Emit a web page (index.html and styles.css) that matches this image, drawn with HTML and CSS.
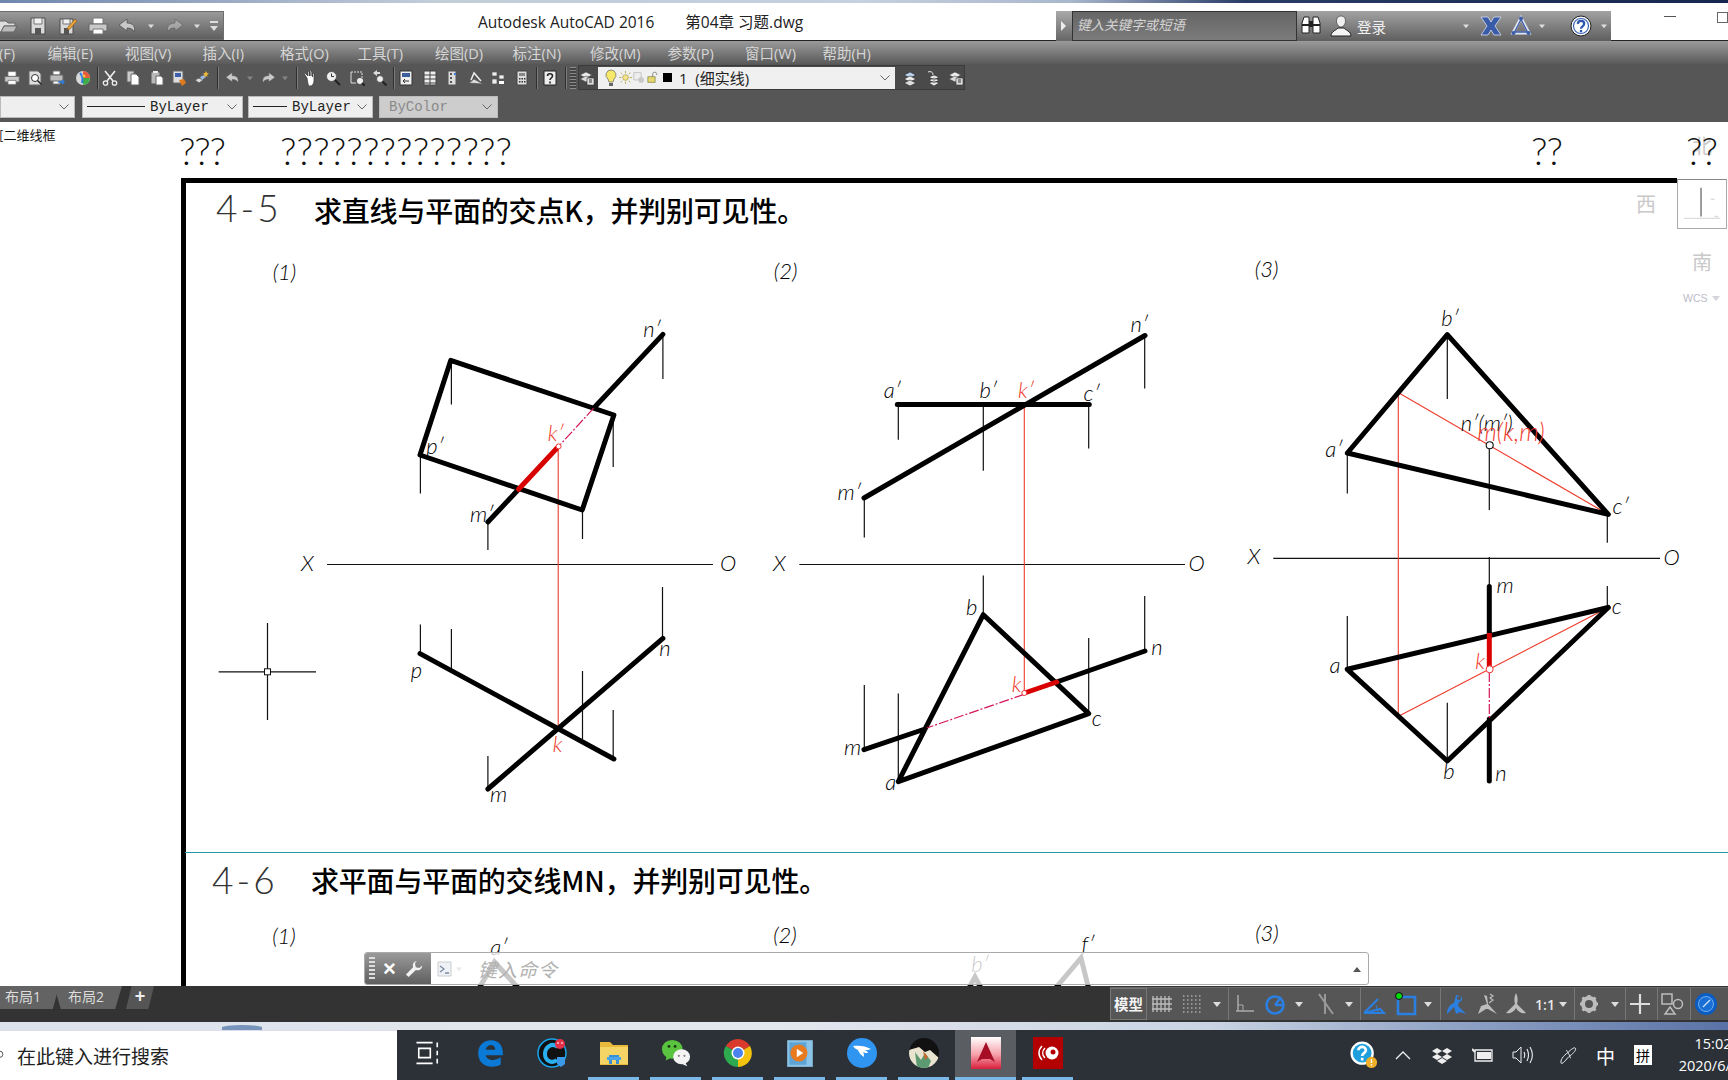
FILE: index.html
```html
<!DOCTYPE html>
<html lang="zh-CN">
<head>
<meta charset="utf-8">
<title>Autodesk AutoCAD 2016</title>
<link rel="stylesheet" href="styles.css">
</head>
<body>
<svg class="defs" aria-hidden="true">
  <defs>
    <symbol id="i-folder" viewBox="0 0 20 20"><path d="M1 5h7l2 2h7v3H6L3 16H1z" fill="#ddd" stroke="#666"/><path d="M6 10h13l-3 6H3z" fill="#bbb" stroke="#666"/></symbol>
    <symbol id="i-save" viewBox="0 0 20 20"><path d="M3 2h14v16H3z" fill="#d8d8d8" stroke="#4a4a4a"/><path d="M6 2h8v6H6z" fill="#f2f2f2" stroke="#777"/><path d="M7 12h6v6H7z" fill="#555"/></symbol>
    <symbol id="i-saveas" viewBox="0 0 20 20"><path d="M2 3h13v15H2z" fill="#d8d8d8" stroke="#4a4a4a"/><path d="M5 3h7v5H5z" fill="#f2f2f2" stroke="#777"/><path d="M6 12h5v6H6z" fill="#555"/><path d="M10 11l7-8 2 2-7 8-3 1z" fill="#e8a33a" stroke="#7a4a10" stroke-width=".6"/></symbol>
    <symbol id="i-print" viewBox="0 0 20 20"><path d="M5 2h10v6H5z" fill="#fff" stroke="#777"/><path d="M1 8h18v7H1z" fill="#c9c9c9" stroke="#666"/><path d="M5 13h10v5H5z" fill="#fff" stroke="#777"/></symbol>
    <symbol id="i-undo" viewBox="0 0 20 20"><path d="M9 3L1 9l8 6v-3c4 0 6 1 7 4 2-5-1-9-7-9z" fill="#c8c8c8" stroke="#555" stroke-width=".8"/></symbol>
    <symbol id="i-redo" viewBox="0 0 20 20"><path d="M11 3l8 6-8 6v-3c-4 0-6 1-7 4-2-5 1-9 7-9z" fill="#c8c8c8" stroke="#555" stroke-width=".8"/></symbol>
    <symbol id="i-dd" viewBox="0 0 8 8"><path d="M0 2h8L4 7z" fill="#ddd"/></symbol>
    <symbol id="i-custom" viewBox="0 0 8 12"><path d="M0 1h8v2H0zM0 6h8L4 11z" fill="#ddd"/></symbol>
    <symbol id="i-chev" viewBox="0 0 10 6"><path d="M.5.5L5 5 9.500.5" fill="none" stroke="#666"/></symbol>
    <symbol id="i-preview" viewBox="0 0 16 16"><path d="M2 1h9l3 3v11H2z" fill="#ddd" stroke="#666"/><circle cx="8" cy="8" r="3.500" fill="#fff" stroke="#333"/><path d="M10.500 10.500l4 4" stroke="#222" stroke-width="1.500"/></symbol>
    <symbol id="i-publish" viewBox="0 0 16 16"><path d="M4 1h7v4H4zM4 10h7v4H4z" fill="#fff" stroke="#777"/><path d="M1 5h13v6H1z" fill="#bbb" stroke="#666"/><path d="M9 12h6M13 10l2 2-2 2" stroke="#2f7de0" stroke-width="1.400" fill="none"/></symbol>
    <symbol id="i-render" viewBox="0 0 16 16"><circle cx="8" cy="8" r="7" fill="#d8d8d8"/><path d="M8 1a7 7 0 0 1 7 7H8z" fill="#e85a3a"/><path d="M15 8a7 7 0 0 1-7 7V8z" fill="#3fae49"/><path d="M5 3c3 3 3 6 2 10" stroke="#2f7de0" stroke-width="2" fill="none"/><circle cx="9" cy="6" r="1.500" fill="#f3c23d"/></symbol>
    <symbol id="i-cut" viewBox="0 0 16 16"><path d="M3 1l8 10M13 1L5 11" stroke="#eee" stroke-width="1.600"/><circle cx="3.500" cy="13" r="2.200" fill="none" stroke="#eee" stroke-width="1.300"/><circle cx="12.500" cy="13" r="2.200" fill="none" stroke="#eee" stroke-width="1.300"/></symbol>
    <symbol id="i-copy" viewBox="0 0 16 16"><path d="M2 1h7v11H2z" fill="#ccc" stroke="#666"/><path d="M6 4h5l3 3v8H6z" fill="#fff" stroke="#666"/></symbol>
    <symbol id="i-paste" viewBox="0 0 16 16"><path d="M2 2h9v12H2z" fill="#b8b8b8" stroke="#555"/><path d="M4 1h5v2H4z" fill="#eee"/><path d="M7 6h5l2 2v7H7z" fill="#fff" stroke="#666"/></symbol>
    <symbol id="i-match" viewBox="0 0 16 16"><path d="M2 1h10v12H2z" fill="#ddd" stroke="#666"/><path d="M4 3h6v4H4z" fill="#3a5fa8"/><path d="M8 10l5-1 2 4-4 3z" fill="#e07a1f"/></symbol>
    <symbol id="i-block" viewBox="0 0 16 16"><path d="M1 10l4-2 4 2-4 3z" fill="#ddd" stroke="#666"/><path d="M6 7l4-2 2 2-4 3z" fill="#9db7df"/><path d="M12 1l1 2 2 .500-2 1.500.5 2-1.500-1-2 1 .500-2-1.500-1.500 2-.500z" fill="#f0b63a"/></symbol>
    <symbol id="i-pan" viewBox="0 0 16 16"><path d="M4 8L2 5c-1-1 0-2 1-1l2 2V2c0-1 1.500-1 1.500 0v4-5c0-1 1.500-1 1.500 0v5-4c0-1 1.500-1 1.500 0v5-3c0-1 1.500-1 1.500 0v7c0 3-2 5-4 5S5 14 4 8z" fill="#fff" stroke="#333" stroke-width=".7"/></symbol>
    <symbol id="i-zoomr" viewBox="0 0 16 16"><circle cx="6.500" cy="6.500" r="5" fill="#eee" stroke="#555"/><path d="M6.500 3.500v3h2.500" stroke="#333" fill="none"/><path d="M10 10l5 5" stroke="#222" stroke-width="2"/></symbol>
    <symbol id="i-zoomw" viewBox="0 0 16 16"><path d="M2 2h11v11" fill="none" stroke="#ddd" stroke-dasharray="2 1"/><path d="M2 2v11h5" fill="none" stroke="#ddd"/><circle cx="11" cy="11" r="3" fill="#eee"/><path d="M13 13l3 3" stroke="#222" stroke-width="2"/></symbol>
    <symbol id="i-zoomp" viewBox="0 0 16 16"><path d="M1 3l4-3v2h3v2H5v2z" fill="#ddd"/><circle cx="8" cy="9" r="3.500" fill="#eee" stroke="#555"/><path d="M10.500 11.500l4 4" stroke="#222" stroke-width="2"/></symbol>
    <symbol id="i-props" viewBox="0 0 16 16"><path d="M2 1h12v14H2z" fill="#eee" stroke="#333"/><path d="M4 3h8v4H4z" fill="#3b5d9c"/><path d="M5 11h6M5 11l2-2M5 11l2 2" stroke="#333" fill="none"/></symbol>
    <symbol id="i-center" viewBox="0 0 16 16"><path d="M2 1h12v14H2z" fill="#eee" stroke="#444"/><path d="M8 1v14M2 5h12M2 9h12M2 13h12" stroke="#444"/></symbol>
    <symbol id="i-palette" viewBox="0 0 16 16"><path d="M4 1h8v14H4z" fill="#ddd" stroke="#555"/><path d="M6 3h2v2H6zM6 7h2v2H6zM6 11h2v2H6z" fill="#555"/><path d="M10 3h2v2h-2z" fill="#3b7dd8"/></symbol>
    <symbol id="i-sheet" viewBox="0 0 16 16"><path d="M1 13l5-4 9 5z" fill="#ddd" stroke="#555" stroke-width=".7"/><path d="M3 10l3-7 7 8" fill="none" stroke="#eee" stroke-width="1.500"/></symbol>
    <symbol id="i-markup" viewBox="0 0 16 16"><path d="M2 2h5v4H2zM9 5h5v4H9zM2 9h5v5H2z" fill="#eee" stroke="#555" stroke-width=".7"/><path d="M9 11h5v3H9z" fill="#fff"/></symbol>
    <symbol id="i-calc" viewBox="0 0 16 16"><path d="M3 1h10v14H3z" fill="#ddd" stroke="#444"/><path d="M5 3h6v3H5z" fill="#888"/><path d="M5 8h1.500v1.500H5zM7.500 8H9v1.500H7.500zM10 8h1.500v1.500H10zM5 11h1.500v1.500H5zM7.500 11H9v1.500H7.500zM10 11h1.500v1.500H10z" fill="#333"/></symbol>
    <symbol id="i-qhelp" viewBox="0 0 16 16"><path d="M2 1h12v14H2z" fill="#eee" stroke="#222"/><path d="M5.500 6c0-3 5-3 5 0 0 2-2.500 2-2.500 4M8 11.500v2" fill="none" stroke="#222" stroke-width="1.600"/></symbol>
    <symbol id="i-layer" viewBox="0 0 16 16"><path d="M1 5l6-3 6 3-6 3z" fill="#eee" stroke="#444" stroke-width=".6"/><path d="M1 9l6-3 6 3-6 3z" fill="#ddd" stroke="#444" stroke-width=".6"/><path d="M8 8h7v7H8z" fill="#ddd" stroke="#333" stroke-width=".6"/><path d="M10 10h3M10 12h3" stroke="#333"/></symbol>
    <symbol id="i-layer2" viewBox="0 0 16 16"><path d="M2 5l6-3 6 3-6 3z" fill="#bcd2ee" stroke="#222" stroke-width=".6"/><path d="M2 9l6-3 6 3-6 3z" fill="#eee" stroke="#222" stroke-width=".6"/><path d="M2 13l6-3 6 3-6 3z" fill="#ddd" stroke="#222" stroke-width=".6"/></symbol>
    <symbol id="i-layer3" viewBox="0 0 16 16"><path d="M3 2c3-1 5 0 5 3" fill="none" stroke="#eee"/><path d="M4 7l5-2 5 2-5 3zM4 10l5-2 5 2-5 3zM4 13l5-2 5 2-5 3z" fill="#eee" stroke="#222" stroke-width=".6"/></symbol>
    <symbol id="i-bulb" viewBox="0 0 14 18"><path d="M7 1a5 5 0 0 1 3 9l-1 3H5L4 10A5 5 0 0 1 7 1z" fill="#f6e86a" stroke="#666" stroke-width=".7"/><path d="M5 14h4v3H5z" fill="#666"/></symbol>
    <symbol id="i-sun" viewBox="0 0 16 16"><circle cx="8" cy="8" r="3.500" fill="#f3e48a" stroke="#9b8a3a" stroke-width=".7"/><path d="M8 0v3M8 13v3M0 8h3M13 8h3M2 2l2 2M12 12l2 2M14 2l-2 2M4 12l-2 2" stroke="#b8a648"/></symbol>
    <symbol id="i-freeze" viewBox="0 0 16 16"><path d="M1 2h9v9H1z" fill="#eee" stroke="#bbb"/><circle cx="10" cy="11" r="3.500" fill="#c9c9c9"/></symbol>
    <symbol id="i-lock" viewBox="0 0 16 16"><path d="M1 7h9v7H1z" fill="#e6d86e" stroke="#6a6a2c" stroke-width=".7"/><path d="M7 7V3c0-2 5-2 5 0v2" fill="none" stroke="#777"/></symbol>
    <symbol id="i-bino" viewBox="0 0 22 22"><path d="M2 8l2-6h5v16H2zM13 2h5l2 6v10h-7z" fill="#fff" stroke="#222"/><path d="M2 10h7M13 10h7" stroke="#222" stroke-width="2"/><path d="M9 6h4v6H9z" fill="#222"/></symbol>
    <symbol id="i-user" viewBox="0 0 22 22"><path d="M11 1c3 0 4.500 2 4.500 5S13 12 11 12 6.500 9 6.500 6 8 1 11 1z" fill="#f0f0f0" stroke="#333" stroke-width=".6"/><path d="M1 21c0-5 6-6 7-8h6c1 2 7 3 7 8z" fill="#f4f4f4" stroke="#222"/></symbol>
    <symbol id="i-x" viewBox="0 0 22 22"><path d="M1 2h7l3 5 3-5h7l-6 9 6 9h-7l-3-5-3 5H1l6-9z" fill="#3a5ba8" stroke="#d6def0" stroke-width=".8"/></symbol>
    <symbol id="i-a360" viewBox="0 0 22 22"><path d="M11 3L3 18h16z" fill="none" stroke="#dfe6f4" stroke-width="3"/><path d="M11 4.500L4.500 17h13z" fill="none" stroke="#3f5ca8" stroke-width="1.300"/><circle cx="11" cy="3.500" r="2" fill="#3f5ca8"/><circle cx="3.500" cy="18" r="2" fill="#3f5ca8"/><circle cx="18.500" cy="18" r="2" fill="#3f5ca8"/></symbol>
    <symbol id="i-help" viewBox="0 0 22 22"><circle cx="11" cy="11" r="10" fill="#f6f8fc" stroke="#222"/><circle cx="11" cy="11" r="7.500" fill="#fff" stroke="#3b64b8" stroke-width="1.200"/><path d="M7.800 8.800c.3-4 6.400-3.600 6.400 0 0 2.700-3.200 2.500-3.200 5M11 15v2.200" fill="none" stroke="#2a56ae" stroke-width="2.300"/></symbol>
    <symbol id="s-grid" viewBox="0 0 24 24"><path d="M3 4v16M7 4v16M11 4v16M15 4v16M19 4v16M2 7h20M2 12h20M2 17h20" stroke="#bdbdbd" stroke-width="1.300"/></symbol>
    <symbol id="s-snap" viewBox="0 0 24 24"><path d="M3 4h18M3 8h18M3 12h18M3 16h18M3 20h18" stroke="#aaa" stroke-width="1.500" stroke-dasharray="1.500 2.500"/></symbol>
    <symbol id="s-ortho" viewBox="0 0 24 24"><path d="M5 3v16M3 19h18" stroke="#aaa" stroke-width="1.500"/><path d="M5 13h5v6" stroke="#aaa" fill="none"/></symbol>
    <symbol id="s-polar" viewBox="0 0 24 24"><circle cx="12" cy="13" r="8.500" fill="none" stroke="#2b7fe0" stroke-width="2.600"/><path d="M12 13h9M12 13l6-8" stroke="#2b7fe0" stroke-width="2.400"/></symbol>
    <symbol id="s-iso" viewBox="0 0 24 24"><path d="M6 2l14 20M12 2v20" stroke="#999" stroke-width="2"/></symbol>
    <symbol id="s-osnap" viewBox="0 0 24 24"><path d="M2 21h20L18 17zM2 21L16 7" fill="none" stroke="#2b7fe0" stroke-width="2.200"/><path d="M14 13l2 7" stroke="#2b7fe0"/></symbol>
    <symbol id="s-track" viewBox="0 0 24 24"><path d="M4 5h17v17H4z" fill="none" stroke="#2b7fe0" stroke-width="2.600"/><circle cx="5" cy="4" r="3" fill="#0d0"/><circle cx="5" cy="4" r="3.500" fill="none" stroke="#111"/></symbol>
    <symbol id="s-anno1" viewBox="0 0 24 24"><path d="M12 22l-2-7-7 7c0-5 2-9 7-11l2-8 4 1c3 1 3 5-1 6l-1 4 8 8-6-2z" fill="#2b7fe0"/><circle cx="15" cy="6" r="2" fill="#555"/></symbol>
    <symbol id="s-anno2" viewBox="0 0 24 24"><path d="M12 12L9 3l3 1 1 8 9 10-9-5-2 0-8 5 3-8z" fill="#bdbdbd"/><path d="M15 2l3 2-3 2 3 2-4 3" stroke="#bdbdbd" fill="none" stroke-width="1.200"/></symbol>
    <symbol id="s-anno3" viewBox="0 0 24 24"><path d="M12 1c2 4 2 8 1 11l9 9c-4 1-8-1-10-5-2 4-6 6-10 5l9-9c-1-3-1-7 1-11z" fill="#bdbdbd"/></symbol>
    <symbol id="s-gear" viewBox="0 0 24 24"><circle cx="12" cy="12" r="6" fill="none" stroke="#bdbdbd" stroke-width="4"/><path d="M12 3v3M12 18v3M3 12h3M18 12h3M5.500 5.500l2 2M16.500 16.500l2 2M18.500 5.500l-2 2M7.500 16.500l-2 2" stroke="#bdbdbd" stroke-width="3"/></symbol>
    <symbol id="s-plus" viewBox="0 0 24 24"><path d="M12 2v20M2 12h20" stroke="#ddd" stroke-width="2.200"/></symbol>
    <symbol id="s-shapes" viewBox="0 0 24 24"><path d="M2 2h10v10H2z" fill="none" stroke="#bdbdbd" stroke-width="1.500"/><circle cx="18" cy="12" r="4.500" fill="none" stroke="#bdbdbd" stroke-width="1.500"/><path d="M10 15l5 7H5z" fill="none" stroke="#bdbdbd" stroke-width="1.500"/></symbol>
    <symbol id="s-iso2" viewBox="0 0 24 24"><circle cx="12" cy="12" r="11" fill="#0b5cc4"/><circle cx="12" cy="12" r="7.500" fill="#1a6fd6" stroke="#6fb0f0"/><path d="M9 15l7-7" stroke="#cfe4fb" stroke-width="1.300"/></symbol>
    <symbol id="t-view" viewBox="0 0 26 26"><path d="M3 4h14M3 22h14M5 9h10v8H5zM21 4v4M21 11v4M21 18v4" fill="none" stroke="#fff" stroke-width="1.400"/></symbol>
    <symbol id="t-edge" viewBox="0 0 28 28"><path d="M3 14C3 6 9 2 15 2c7 0 11 5 11 12v2H10c1 5 8 6 14 2v7c-8 4-21 2-21-11zm7-3h9c0-6-8-6-9 0z" fill="#0a7ad6"/></symbol>
    <symbol id="t-c" viewBox="0 0 30 30"><circle cx="15" cy="15" r="14" fill="#111" stroke="#19a3e8" stroke-width="1.500"/><path d="M21 9c-6-5-13 0-13 7s7 10 12 6" fill="none" stroke="#2ab0ee" stroke-width="4"/><circle cx="23" cy="6" r="5" fill="#e6304a"/><path d="M20 5h2M24 5h2" stroke="#fff"/><path d="M20 19h8v7l-4 3-4-3z" fill="#3a9ae8"/></symbol>
    <symbol id="t-folder" viewBox="0 0 30 30"><path d="M1 4h10l3 3h15v20H1z" fill="#e8b93a"/><path d="M1 9h28v17H1z" fill="#f6d567"/><path d="M10 17h10v9h-3v-4h-4v4h-3z" fill="#3a90d6"/><path d="M8 19h14v3H8z" fill="#4aa5e8"/></symbol>
    <symbol id="t-wechat" viewBox="0 0 32 30"><ellipse cx="12" cy="11" rx="11" ry="10" fill="#59c23f"/><path d="M6 18l-1 5 6-3z" fill="#59c23f"/><circle cx="8.500" cy="8" r="1.500" fill="#14370c"/><circle cx="15" cy="8" r="1.500" fill="#14370c"/><ellipse cx="22" cy="19" rx="9" ry="8" fill="#f4f4f4"/><path d="M26 25l2 4-5-2z" fill="#f4f4f4"/><circle cx="19" cy="18" r="1.200" fill="#888"/><circle cx="25" cy="18" r="1.200" fill="#888"/></symbol>
    <symbol id="t-chrome" viewBox="0 0 30 30"><path d="M15 15L2.800 8A14 14 0 0 1 27 8z" fill="#d93a2c"/><path d="M15 15L27 8a14 14 0 0 1-12 21z" fill="#f4c20d"/><path d="M15 15v14A14 14 0 0 1 2.800 8z" fill="#2da94f"/><circle cx="15" cy="15" r="6.500" fill="#fff"/><circle cx="15" cy="15" r="5" fill="#4a82ee"/></symbol>
    <symbol id="t-player" viewBox="0 0 26 30"><path d="M1 3h24v25H1z" fill="#8cc4e8"/><path d="M3 5h16v21H3z" fill="#5ea3d4"/><circle cx="12" cy="15" r="8" fill="#e87a1f"/><path d="M10 11l6 4-6 4z" fill="#fff"/></symbol>
    <symbol id="t-bird" viewBox="0 0 30 30"><circle cx="15" cy="15" r="15" fill="#2f95f0"/><path d="M6 8c6-1 13 0 18 3-2 1-4 1-6 1 2 1 3 2 3 3-2 0-4 0-5-1 1 2 1 3 1 5-3-2-5-4-6-7-2-1-4-2-5-4z" fill="#fff"/></symbol>
    <symbol id="t-avatar" viewBox="0 0 30 30"><clipPath id="av"><circle cx="15" cy="15" r="15"/></clipPath><g clip-path="url(#av)"><path d="M0 0h30v30H0z" fill="#111"/><path d="M0 12l10-3 6 5 5-2 9 8v10H0z" fill="#e8e4d0"/><path d="M6 14l6 8 4-7 6 8-3 7H8z" fill="#5c9a72"/><path d="M14 13l5 6-3 3z" fill="#c8682c"/></g></symbol>
    <symbol id="t-cad" viewBox="0 0 30 32"><defs><linearGradient id="cadg" x1="0" y1="0" x2="0" y2="1"><stop offset="0" stop-color="#fff"/><stop offset=".55" stop-color="#f6a0aa"/><stop offset="1" stop-color="#d91f3c"/></linearGradient></defs><path d="M0 0h30v32H0z" fill="url(#cadg)"/><path d="M15 5l9 20-5-3h-8l-5 3z" fill="#a50e24"/></symbol>
    <symbol id="t-red" viewBox="0 0 30 32"><path d="M0 0h30v32H0z" fill="#b30000"/><circle cx="19" cy="16" r="6.500" fill="#fff"/><circle cx="20" cy="15" r="2.500" fill="#b30000"/><path d="M9 9c-4 4-4 10 0 14M12 11c-3 3-3 7 0 10" fill="none" stroke="#fff" stroke-width="1.500"/></symbol>
    <symbol id="t-qhelp" viewBox="0 0 30 30"><circle cx="13" cy="13" r="12.500" fill="#fff"/><circle cx="13" cy="13" r="10" fill="#1fa0dd"/><path d="M9 10c0-5 8-5 8 0 0 3-4 3-4 6M13 18v3" fill="none" stroke="#fff" stroke-width="2.800"/><circle cx="23" cy="23" r="6" fill="#f0b02a"/><path d="M23 19.500v4M23 25v1.500" stroke="#fff" stroke-width="1.500"/></symbol>
    <symbol id="t-up" viewBox="0 0 20 20"><path d="M3 14l7-7 7 7" fill="none" stroke="#eee" stroke-width="1.300"/></symbol>
    <symbol id="t-drop" viewBox="0 0 20 20"><path d="M5 3l5 3-5 3-5-3zM15 3l5 3-5 3-5-3zM5 9l5 3-5 3-5-3zM15 9l5 3-5 3-5-3zM10 13l5 3-5 3-5-3z" fill="#eee"/></symbol>
    <symbol id="t-batt" viewBox="0 0 22 16"><path d="M3 3h17v11H3z" fill="none" stroke="#eee" stroke-width="1.300"/><path d="M5 5h14v7H5z" fill="#eee"/><path d="M0 2l3 3" stroke="#eee" stroke-width="2"/></symbol>
    <symbol id="t-sound" viewBox="0 0 22 20"><path d="M1 7h3l5-5v16l-5-5H1z" fill="none" stroke="#eee"/><path d="M12 7c1 2 1 4 0 6M15 4c2 4 2 8 0 12M18 2c3 5 3 11 0 16" fill="none" stroke="#eee" stroke-width="1.100"/></symbol>
    <symbol id="t-pen" viewBox="0 0 22 24"><path d="M3 22c-2-3 2-9 8-13 4-4 8-7 9-5 1 3-4 7-8 10-3 3-7 9-9 8z" fill="none" stroke="#eee" stroke-width="1.200"/><path d="M9 6c2 3 4 6 5 10" fill="none" stroke="#eee"/></symbol>
  </defs>
</svg>

<div class="strip-top"></div>

<header class="titlebar">
  <div class="qat">
    <svg class="ico20 folder"><use href="#i-folder"/></svg>
    <svg class="ico20"><use href="#i-save"/></svg>
    <svg class="ico20"><use href="#i-saveas"/></svg>
    <svg class="ico20"><use href="#i-print"/></svg>
    <svg class="ico20"><use href="#i-undo"/></svg>
    <svg class="dd6"><use href="#i-dd"/></svg>
    <svg class="ico20 faded"><use href="#i-redo"/></svg>
    <svg class="dd6"><use href="#i-dd"/></svg>
    <svg class="custom"><use href="#i-custom"/></svg>
  </div>
  <div class="doc-title"><span>Autodesk AutoCAD 2016</span><span>第04章 习题.dwg</span></div>
  <div class="search-group">
    <div class="search-arrow"></div>
    <div class="search-input">键入关键字或短语</div>
    <div class="infocenter">
      <svg class="ico22"><use href="#i-bino"/></svg>
      <svg class="ico22 user"><use href="#i-user"/></svg>
      <span class="login">登录</span>
      <svg class="dd6 login-dd"><use href="#i-dd"/></svg>
      <svg class="ico22 xapp"><use href="#i-x"/></svg>
      <svg class="ico22 a360"><use href="#i-a360"/></svg>
      <svg class="dd6 a360-dd"><use href="#i-dd"/></svg>
      <svg class="ico22 help"><use href="#i-help"/></svg>
      <svg class="dd6 help-dd"><use href="#i-dd"/></svg>
    </div>
  </div>
  <div class="winctl"><span class="win-min"></span><span class="win-max"></span></div>
</header>

<nav class="menubar">
  <span class="menu-first">文件(F)</span><span>编辑(E)</span><span>视图(V)</span><span>插入(I)</span><span>格式(O)</span><span>工具(T)</span><span>绘图(D)</span><span>标注(N)</span><span>修改(M)</span><span>参数(P)</span><span>窗口(W)</span><span>帮助(H)</span>
</nav>

<div class="toolrow">
  <div class="std-tools">
    <svg class="ico16"><use href="#i-print"/></svg>
    <svg class="ico16"><use href="#i-preview"/></svg>
    <svg class="ico16"><use href="#i-publish"/></svg>
    <svg class="ico16"><use href="#i-render"/></svg>
    <i class="sep"></i>
    <svg class="ico16"><use href="#i-cut"/></svg>
    <svg class="ico16"><use href="#i-copy"/></svg>
    <svg class="ico16"><use href="#i-paste"/></svg>
    <svg class="ico16"><use href="#i-match"/></svg>
    <svg class="ico16"><use href="#i-block"/></svg>
    <i class="sep"></i>
    <svg class="ico16"><use href="#i-undo"/></svg>
    <svg class="dd6 dim"><use href="#i-dd"/></svg>
    <svg class="ico16"><use href="#i-redo"/></svg>
    <svg class="dd6 dim"><use href="#i-dd"/></svg>
    <i class="sep"></i>
    <svg class="ico16"><use href="#i-pan"/></svg>
    <svg class="ico16"><use href="#i-zoomr"/></svg>
    <svg class="ico16"><use href="#i-zoomw"/></svg>
    <svg class="ico16"><use href="#i-zoomp"/></svg>
    <i class="sep"></i>
    <svg class="ico16"><use href="#i-props"/></svg>
    <svg class="ico16"><use href="#i-center"/></svg>
    <svg class="ico16"><use href="#i-palette"/></svg>
    <svg class="ico16"><use href="#i-sheet"/></svg>
    <svg class="ico16"><use href="#i-markup"/></svg>
    <svg class="ico16"><use href="#i-calc"/></svg>
    <i class="sep"></i>
    <svg class="ico16"><use href="#i-qhelp"/></svg>
    <i class="sep"></i>
    <i class="grip"></i>
  </div>
  <div class="layer-tools">
    <svg class="ico16"><use href="#i-layer"/></svg>
    <div class="layer-combo">
      <svg class="bulb"><use href="#i-bulb"/></svg>
      <svg class="ico13"><use href="#i-sun"/></svg>
      <svg class="ico13"><use href="#i-freeze"/></svg>
      <svg class="ico13"><use href="#i-lock"/></svg>
      <i class="swatch"></i>
      <span class="layer-name">1 &nbsp;(细实线)</span>
      <svg class="chev"><use href="#i-chev"/></svg>
    </div>
    <svg class="ico16"><use href="#i-layer2"/></svg>
    <svg class="ico16"><use href="#i-layer3"/></svg>
    <svg class="ico16"><use href="#i-layer"/></svg>
  </div>
</div>

<div class="toolrow propsrow">
  <div class="combo c-color"><svg class="chev"><use href="#i-chev"/></svg></div>
  <div class="combo c-ltype"><i class="ln ln-long"></i><span>ByLayer</span><svg class="chev"><use href="#i-chev"/></svg></div>
  <div class="combo c-lweight"><i class="ln ln-short"></i><span>ByLayer</span><svg class="chev"><use href="#i-chev"/></svg></div>
  <div class="combo c-plot"><span>ByColor</span><svg class="chev"><use href="#i-chev"/></svg></div>
</div>

<main class="canvas">
  <svg class="drawing" viewBox="0 122 1728 864" width="1728" height="864">
    <path class="frame" d="M183.500 180.500V986M181 180.500H1677"/>
    <path class="teal" d="M185 852.500H1728"/>

    <text class="ui-lbl" x="-1" y="140">[二维线框</text>
    <text class="cube-txt" x="1702" y="154" text-anchor="middle">北</text>
    <text class="qm" x="179" y="165" textLength="47">???</text>
    <text class="qm" x="280" y="165" textLength="232">??????????????</text>
    <text class="qm" x="1531" y="165" textLength="32">??</text>
    <text class="qm" x="1686" y="165" textLength="32">??</text>
    <text class="cube-txt" x="1646" y="212" text-anchor="middle">西</text>
    <text class="cube-txt" x="1702" y="270" text-anchor="middle">南</text>

    <text class="num" x="216" y="222">4-5</text>
    <text class="hd" x="314" y="222">求直线与平面的交点K，并判别可见性。</text>
    <text class="num" x="212" y="894">4-6</text>
    <text class="hd" x="311" y="892">求平面与平面的交线MN，并判别可见性。</text>

    <!-- (1) -->
    <path class="thin" d="M662.900 334V379M451.400 361V404.500M613.200 415V467M420.400 455V493.600M582.500 510V539M487.900 522V550M327 564.500H713M420.400 624.500V653.600M451.400 629V670M662.500 587V638M582.500 671V739M613.200 710V759M487.900 756V789M218.600 671.800H316M267.500 623V720"/>
    <rect class="pick" x="264.500" y="668.800" width="6" height="6"/>
    <path class="red" d="M558.200 446V730"/>
    <path class="thick" d="M450.700 360.400L613.900 415L582.200 510L420 455ZM662.900 334.400L593.600 408.200M518.600 489.300L487.900 522M420 653.600L613.900 759M662.900 638.400L487.900 789"/>
    <path class="dash" d="M593.600 408.200L558.600 446.400"/>
    <path class="thick-red" d="M556.800 448.200L518.600 489.300"/>
    <circle class="ring-red" cx="558.600" cy="446.400" r="2.500"/>

    <!-- (2) -->
    <path class="thin" d="M898.300 404.500V439.800M983.300 404.500V470.700M1088.700 404.500V448.500M1144.700 335.500V388.500M864.300 498V537.600M799.300 564.500H1185M983.300 575.500V614.700M1144.700 596V651M1088.700 638V713.600M864.300 685V749M898.300 693.600V781.600"/>
    <path class="red" d="M1024.300 404.500V691.800"/>
    <path class="thick" d="M1145 335.500L864 498M897.300 404.500H1089.300M983.300 614.700L1088.700 713.600L898.300 781.600ZM1145 651L1056.700 682M925 729L864 749.600"/>
    <path class="thick-red" d="M1056.700 682L1026 692.500"/>
    <path class="dash" d="M1024 694.400L926.700 728"/>
    <circle class="ring-red" cx="1024.300" cy="693" r="2.500"/>

    <!-- (3) -->
    <path class="thin" d="M1447.300 334.700V399M1347.300 453V493.600M1607.300 514V542.700M1489.300 445V510M1273.300 558.400H1660M1489.300 557V586M1347.300 616V669M1447.300 702.700V761M1607.300 586V607"/>
    <path class="red" d="M1398.300 393V716M1399 393L1608.300 514.400M1399 716L1608.300 607.500"/>
    <path class="thick" d="M1447.300 334.700L1608.300 514.400L1347.300 453ZM1347.300 669.300L1608.300 607.500M1347.300 669.300L1447.300 761L1608.300 607.500M1489.300 586.400V633M1489.300 719V781"/>
    <path class="thick-red butt" d="M1489.300 633V667.500"/>
    <path class="dash" d="M1489.300 672V719"/>
    <circle class="ring-black" cx="1489.700" cy="445.300" r="3.500"/>
    <circle class="ring-red" cx="1489.700" cy="669.300" r="3.500"/>

    <!-- labels -->
    <g class="lbl">
      <text x="284.500" y="280">(1)</text>
      <text x="652" y="337" >n′</text>
      <text x="435" y="454">p′</text>
      <text x="481.800" y="522">m′</text>
      <text x="307.500" y="571">X</text>
      <text x="728" y="571">O</text>
      <text x="416.400" y="678">p</text>
      <text x="665" y="656">n</text>
      <text x="498.600" y="802">m</text>

      <text x="785.700" y="279">(2)</text>
      <text x="1139.300" y="332">n′</text>
      <text x="892.300" y="398">a′</text>
      <text x="988.300" y="398">b′</text>
      <text x="1091.700" y="401">c′</text>
      <text x="849.300" y="500">m′</text>
      <text x="779.300" y="571">X</text>
      <text x="1196.700" y="571">O</text>
      <text x="971.700" y="615">b</text>
      <text x="1157" y="655">n</text>
      <text x="1096.700" y="726">c</text>
      <text x="852.700" y="755">m</text>
      <text x="890.700" y="790">a</text>

      <text x="1266.700" y="277">(3)</text>
      <text x="1450" y="326">b′</text>
      <text x="1334" y="457">a′</text>
      <text x="1486.700" y="431">n′(m′)</text>
      <text x="1620.700" y="514">c′</text>
      <text x="1254" y="564">X</text>
      <text x="1671.700" y="565">O</text>
      <text x="1505" y="593">m</text>
      <text x="1616.700" y="614">c</text>
      <text x="1335" y="673">a</text>
      <text x="1449" y="779">b</text>
      <text x="1501" y="781">n</text>

      <text x="284" y="944">(1)</text>
      <text x="785" y="943">(2)</text>
      <text x="1267" y="941">(3)</text>
      <text x="499" y="955">a′</text>
      <text x="1088" y="952">f′</text>
      <text x="980" y="972">b′</text>
    </g>
    <g class="lbl lbl-red">
      <text x="555.700" y="441">k′</text>
      <text x="557.500" y="752">k</text>
      <text x="1026" y="398">k′</text>
      <text x="1016.700" y="692">k</text>
      <text class="big" x="1511" y="441">m(k,m)</text>
      <text x="1480" y="669">k</text>
    </g>
    <path class="thick-under" d="M478 990L494.500 962L520 990M968 990L975 977L982 990M1054 990L1081 958L1089 990"/>
  </svg>

  <aside class="viewcube">
    <div class="cube-face"><svg class="cube-mark" viewBox="0 0 50 50"><path d="M24 8V38" stroke="#999" stroke-width="2"/><path d="M6 40H44M34 20h4M38 38h4" stroke="#ddd" stroke-width="1.500"/></svg></div>
    <div class="wcs">WCS <i class="wcs-arrow"></i></div>
  </aside>

  <div class="cmdline">
    <div class="cmd-handle">
      <i class="cmd-grip"></i>
      <span class="cmd-x">×</span>
      <svg class="cmd-wrench" viewBox="0 0 20 20"><path d="M13 1a5 5 0 0 0-4 7L1 16l3 3 8-8a5 5 0 0 0 7-5l-3 3-4-1-1-4z" fill="#f2f2f2"/></svg>
    </div>
    <div class="cmd-input">
      <svg class="cmd-prompt" viewBox="0 0 16 16"><path d="M1 1h13v14H1z" fill="#eef2f6" stroke="#ccc"/><path d="M3 5l4 3-4 3M8 12h4" fill="none" stroke="#7c8aa0" stroke-width="1.300"/></svg>
      <svg class="dd6 cmd-dd"><use href="#i-dd"/></svg>
      <span class="cmd-text">键入命令</span>
    </div>
    <i class="cmd-up"></i>
  </div>
</main>

<footer class="statusbar">
  <div class="tabs">
    <span class="tab">布局1</span>
    <span class="tab">布局2</span>
    <span class="tab-add">+</span>
  </div>
  <div class="status-tools">
    <span class="model">模型</span>
    <svg class="st"><use href="#s-grid"/></svg>
    <svg class="st"><use href="#s-snap"/></svg>
    <svg class="dd8"><use href="#i-dd"/></svg>
    <i class="st-sep"></i>
    <svg class="st"><use href="#s-ortho"/></svg>
    <svg class="st"><use href="#s-polar"/></svg>
    <svg class="dd8"><use href="#i-dd"/></svg>
    <svg class="st"><use href="#s-iso"/></svg>
    <svg class="dd8"><use href="#i-dd"/></svg>
    <i class="st-sep"></i>
    <svg class="st"><use href="#s-osnap"/></svg>
    <svg class="st"><use href="#s-track"/></svg>
    <svg class="dd8"><use href="#i-dd"/></svg>
    <i class="st-sep"></i>
    <svg class="st"><use href="#s-anno1"/></svg>
    <svg class="st"><use href="#s-anno2"/></svg>
    <svg class="st"><use href="#s-anno3"/></svg>
    <span class="scale">1:1</span>
    <svg class="dd8"><use href="#i-dd"/></svg>
    <i class="st-sep"></i>
    <svg class="st"><use href="#s-gear"/></svg>
    <svg class="dd8"><use href="#i-dd"/></svg>
    <i class="st-sep"></i>
    <svg class="st"><use href="#s-plus"/></svg>
    <i class="st-sep"></i>
    <svg class="st"><use href="#s-shapes"/></svg>
    <i class="st-sep"></i>
    <svg class="st"><use href="#s-iso2"/></svg>
  </div>
</footer>

<div class="strip-bottom"><i class="strip-blob"></i></div>

<footer class="taskbar">
  <div class="tb-search">
    <svg class="tb-lens" viewBox="0 0 16 16"><circle cx="6" cy="6" r="5" fill="none" stroke="#333" stroke-width="1.300"/><path d="M2 10l-3 5" stroke="#333" stroke-width="1.300"/></svg>
    <span>在此键入进行搜索</span>
  </div>
  <div class="tb-apps">
    <div class="app"><svg class="app-ico"><use href="#t-view"/></svg></div>
    <div class="app"><svg class="app-ico"><use href="#t-edge"/></svg></div>
    <div class="app"><svg class="app-ico"><use href="#t-c"/></svg></div>
    <div class="app on"><svg class="app-ico"><use href="#t-folder"/></svg></div>
    <div class="app on"><svg class="app-ico"><use href="#t-wechat"/></svg></div>
    <div class="app on"><svg class="app-ico"><use href="#t-chrome"/></svg></div>
    <div class="app on"><svg class="app-ico"><use href="#t-player"/></svg></div>
    <div class="app on"><svg class="app-ico"><use href="#t-bird"/></svg></div>
    <div class="app on"><svg class="app-ico"><use href="#t-avatar"/></svg></div>
    <div class="app on active"><svg class="app-ico"><use href="#t-cad"/></svg></div>
    <div class="app on"><svg class="app-ico"><use href="#t-red"/></svg></div>
  </div>
  <div class="tray">
    <svg class="tray-ico"><use href="#t-qhelp"/></svg>
    <svg class="tray-ico small"><use href="#t-up"/></svg>
    <svg class="tray-ico small"><use href="#t-drop"/></svg>
    <svg class="tray-ico small"><use href="#t-batt"/></svg>
    <svg class="tray-ico small"><use href="#t-sound"/></svg>
    <svg class="tray-ico small"><use href="#t-pen"/></svg>
    <span class="ime">中</span>
    <span class="ime-box">拼</span>
    <div class="clock"><div>15:02</div><div>2020/6/14</div></div>
  </div>
</footer>
</body>
</html>
```
FILE: styles.css
```css
* { box-sizing: border-box; }
html, body { margin: 0; padding: 0; }
body {
  width: 1728px; height: 1080px; overflow: hidden;
  display: flex; flex-direction: column;
  background: #fff;
  font-family: "Open Sans", "Noto Sans CJK SC", sans-serif;
}
.defs { width: 0; height: 0; position: absolute; }
i { display: block; font-style: normal; }
svg { display: block; flex: none; }

.ico20 { width: 20px; height: 20px; }
.ico22 { width: 22px; height: 22px; }
.ico16 { width: 16px; height: 16px; }
.ico13 { width: 13px; height: 13px; }
.dd6 { width: 6px; height: 6px; }
.dd8 { width: 8px; height: 8px; }
.faded { opacity: .55; }
.dim { opacity: .35; }

.strip-top {
  height: 3px; flex: none;
  background: linear-gradient(90deg, #6f86ad 0, #c3ccd9 25%, #c6d0de 50%, #a9b7cc 62%, #2a3b68 72%, #16264f 100%);
}

.titlebar { height: 38px; flex: none; display: flex; background: #fff; border-bottom: 1px solid #222; }
.qat {
  width: 224px; margin-top: 8px; display: flex; align-items: center; gap: 10px;
  background: linear-gradient(#9a9a9a, #5f5f5f); border: 1px solid #6e6e6e; border-left: 0;
}
.folder { margin-left: -2px; }
.custom { width: 8px; height: 12px; }
.doc-title { margin-left: 254px; padding-top: 8px; display: flex; gap: 31px; font-size: 15.5px; line-height: 22px; color: #222; white-space: nowrap; }

.search-group { margin-left: auto; margin-top: 8px; display: flex; height: 30px; }
.search-arrow { width: 16px; background: linear-gradient(#aaa, #666); position: relative; }
.search-arrow::after { content: ""; position: absolute; left: 5px; top: 10px; border-left: 5px solid #eee; border-top: 5px solid transparent; border-bottom: 5px solid transparent; }
.search-input {
  width: 225px; padding: 3px 0 0 4px; font-size: 13.5px; line-height: 20px; font-style: italic; color: #d4d4d4;
  background: linear-gradient(#666, #7b7b7b); border: 1px solid #333; white-space: nowrap;
}
.infocenter { width: 314px; display: flex; align-items: center; padding-left: 3px; background: linear-gradient(#a2a2a2, #5f5f5f); }
.user { margin-left: 8px; }
.login { margin-left: 5px; font-size: 14.500px; color: #f0f0f0; }
.login-dd { margin-left: 77px; }
.xapp { margin-left: 11px; }
.a360 { margin-left: 8px; }
.a360-dd { margin-left: 7px; }
.help { margin-left: 25px; }
.help-dd { margin-left: 9px; }
.winctl { width: 117px; position: relative; }
.win-min { position: absolute; left: 53px; top: 13px; width: 12px; height: 1px; background: #555; }
.win-max { position: absolute; left: 106px; top: 9px; width: 11px; height: 11px; border: 1px solid #666; }

.menubar {
  height: 23px; flex: none; display: flex; gap: 27.500px; align-items: center;
  background: linear-gradient(#9a9a9a, #5a5a5a); color: #d6d6d6; font-size: 14.500px; white-space: nowrap;
}
.menubar span { width: 50px; flex: none; }
.menu-first { margin-left: -30px; }

.toolrow { height: 27px; flex: none; display: flex; align-items: center; background: #565656; }
.std-tools {
  flex: none; display: grid; align-items: center; justify-items: start; padding-left: 4px; width: 578px; height: 27px;
  grid-template-columns: 23px 22px 26px 22px 5px 23px 24px 22px 23px 23px 8px 22px 13px 22px 14px 7px 22px 24px 23px 21px 5px 24px 22px 24px 22px 24px 22px 6px 23px 5px 8px;
}
.sep { width: 1px; height: 22px; background: #2f2f2f; box-shadow: 1px 0 0 #7a7a7a; }
.grip { width: 6px; height: 22px; background: repeating-linear-gradient(#8a8a8a 0 1px, #444 1px 3px); }
.layer-tools {
  flex: none; width: 387px; height: 25px; display: flex; align-items: center; gap: 7px;
  background: #4a4a4a; border: 1px solid #3b3b3b;
}
.layer-combo {
  width: 300px; height: 22px; display: flex; align-items: center; background: #f0f0f0; margin-left: -4px; padding-left: 4px; gap: 1px; color: #222; font-size: 15px;
}
.bulb { width: 14px; height: 18px; margin-left: 2px; }
.swatch { width: 9px; height: 9px; background: #000; margin-left: 2px; }
.layer-name { margin-left: 6px; white-space: nowrap; }
.chev { width: 10px; height: 6px; margin-left: auto; margin-right: 5px; }

.propsrow { height: 31px; gap: 5px; }
.combo {
  height: 22px; display: flex; align-items: center; background: #efefef; border: 1px solid #bbb;
  font-family: "Liberation Mono", monospace; font-size: 14px; color: #222;
}
.c-color { width: 75px; }
.c-ltype { width: 161px; margin-left: 2px; padding-left: 4px; }
.c-lweight { width: 125px; padding-left: 4px; }
.c-plot { width: 119px; background: #cdcdcd; color: #8a8a8a; padding-left: 9px; margin-left: 1px; }
.ln { height: 1px; background: #222; margin-right: 5px; }
.ln-long { width: 58px; }
.ln-short { width: 34px; }

.canvas { flex: 1; position: relative; background: #fff; overflow: hidden; }
.drawing { position: absolute; left: 0; top: 0; }
.frame { fill: none; stroke: #000; stroke-width: 5; }
.teal { fill: none; stroke: #1f9aa5; stroke-width: 1; }
.thin { fill: none; stroke: #111; stroke-width: 1.200; }
.thick { fill: none; stroke: #000; stroke-width: 5; stroke-linecap: round; stroke-linejoin: round; }
.thick-under { fill: none; stroke: #000; stroke-width: 5; }
.thick-red { fill: none; stroke: #d90000; stroke-width: 5; stroke-linecap: round; }
.butt { stroke-linecap: butt; }
.red { fill: none; stroke: #ef3b2c; stroke-width: 1.100; }
.dash { fill: none; stroke: #d4145a; stroke-width: 1.200; stroke-dasharray: 10 2 2 2; }
.pick { fill: #fff; stroke: #111; stroke-width: 1; }
.ring-red { fill: #fff; stroke: #e33; stroke-width: 1; }
.ring-black { fill: #fff; stroke: #111; stroke-width: 1.100; }

.ui-lbl { font-size: 13px; fill: #111; font-family: "Noto Sans CJK SC", sans-serif; }
.qm { font-family: Lato, sans-serif; font-weight: 300; font-size: 38px; fill: #111; }
.cube-txt { font-family: "Noto Sans CJK SC", sans-serif; font-size: 20px; fill: #c9c9c9; }
.num { font-family: Lato, sans-serif; font-weight: 300; font-size: 37px; letter-spacing: 3px; fill: #333; }
.hd { font-family: "Noto Sans CJK SC", sans-serif; font-weight: 500; font-size: 28px; letter-spacing: -.200px; fill: #000; }
.lbl text { font-family: Lato, sans-serif; font-weight: 300; font-style: italic; font-size: 22px; fill: #000; text-anchor: middle; }
.lbl-red text { fill: #ef3b2c; }
.lbl-red .big { font-size: 25px; }

.viewcube { position: absolute; left: 1620px; top: 54px; width: 108px; height: 190px; }
.cube-face { position: absolute; left: 57px; top: 3px; width: 50px; height: 50px; background: #fff; border: 1px solid #aaa; border-top-color: #888; }
.cube-mark { width: 48px; height: 48px; }
.wcs { position: absolute; left: 63px; top: 116px; font-size: 10.500px; color: #bcbcc8; font-family: "Liberation Sans", sans-serif; display: flex; align-items: center; gap: 4px; white-space: nowrap; }
.wcs-arrow { border-top: 5px solid #d5d5dd; border-left: 4px solid transparent; border-right: 4px solid transparent; }

.cmdline { position: absolute; left: 364px; top: 830px; width: 1005px; height: 33px; display: flex; border: 1px solid #aaa; border-radius: 3px; background: rgba(255,255,255,.78); }
.cmd-handle { width: 66px; flex: none; display: flex; align-items: center; background: linear-gradient(#9a9a9a, #5f5f5f); border-radius: 2px 0 0 2px; }
.cmd-grip { width: 6px; height: 24px; margin-left: 4px; background: repeating-linear-gradient(#ddd 0 2px, transparent 2px 4px); }
.cmd-x { margin-left: 8px; font: 700 22px/1 "Liberation Sans", sans-serif; color: #fff; }
.cmd-wrench { width: 18px; height: 18px; margin-left: 9px; }
.cmd-input { flex: 1; display: flex; align-items: center; padding-left: 6px; }
.cmd-prompt { width: 16px; height: 16px; }
.cmd-dd { margin-left: 3px; opacity: .6; }
.cmd-text { margin-left: 16px; font-size: 19px; font-style: italic; color: #b2b2b2; letter-spacing: 1px; }
.cmd-up { position: absolute; right: 7px; top: 14px; border-bottom: 5px solid #555; border-left: 4px solid transparent; border-right: 4px solid transparent; }

.statusbar { height: 36px; flex: none; display: flex; background: #333; justify-content: space-between; }
.tabs { display: flex; height: 23px; color: #ddd; font-size: 14px; }
.tab { width: 68px; padding-left: 14px; margin-left: -5px; line-height: 21px; background: #636363; clip-path: polygon(0 0, 100% 0, 90% 100%, 10% 100%); }
.tab:first-child { width: 62px; margin-left: -3px; padding-left: 8px; clip-path: polygon(0 0, 100% 0, 90% 100%, 0 100%); }
.tab-add { width: 28px; margin-left: 4px; text-align: center; font: 700 18px/21px "Liberation Sans", sans-serif; color: #eee; background: #555; clip-path: polygon(20% 0, 100% 0, 80% 100%, 0 100%); }
.status-tools {
  width: 618px; height: 33px; margin-top: 1px; display: grid; align-items: center; justify-items: start; background: #565656; border-top: 1px solid #6a6a6a;
  grid-template-columns: 40px 30px 33px 15px 5px 30px 32px 18px 32px 15px 2px 32px 30px 16px 4px 31px 29px 29px 26px 15px 3px 34px 14px 3px 29px 3px 30px 4px 34px;
}
.model { width: 37px; height: 32px; line-height: 30px; font-size: 14.500px; font-weight: 700; color: #f4f4f4; text-align: center; border: 1px solid #777; font-family: "Noto Sans CJK SC", sans-serif; }
.st { width: 24px; height: 24px; }
.st-sep { width: 1px; height: 32px; background: #777; }
.scale { width: 24px; font-size: 14px; font-weight: 600; color: #e8e8e8; text-align: center; }

.strip-bottom {
  height: 8px; flex: none; position: relative;
  background: linear-gradient(90deg, #dde3ec 0, #e2e7ef 45%, #c9d3e2 70%, #8da0c4 85%, #5a72a6 100%);
}
.strip-blob { position: absolute; left: 222px; top: 3px; width: 40px; height: 5px; border-radius: 50% 50% 0 0; background: #5d7fae; opacity: .8; }

.taskbar { height: 50px; flex: none; display: flex; background: #2c3138; color: #fff; }
.tb-search { width: 397px; flex: none; display: flex; align-items: center; background: #fff; color: #222; font-size: 19px; padding-left: 2px; border-top: 1px solid #dde; }
.tb-lens { width: 10px; height: 15px; margin-left: -6px; }
.tb-search span { margin-left: 11px; }
.tb-apps { display: flex; gap: 11px; padding-left: 5px; flex: none; }
.app { width: 51px; height: 50px; display: flex; align-items: center; justify-content: center; padding-bottom: 2px; border-bottom: 3px solid transparent; }
.app.on { border-bottom-color: #7ab8e8; }
.app.active { width: 61px; margin: 0 -5px; background: #5a5e63; }
.app-ico { width: 30px; height: 32px; }
.tray {
  flex: none; margin-left: 277px; display: grid; align-items: center; justify-items: start; height: 50px;
  grid-template-columns: 40px 39px 41px 40px 45px 38px 37px 46px 74px;
}
.tray-ico { width: 28px; height: 28px; }
.tray-ico.small { width: 22px; height: 20px; margin-left: 2px; }
.ime { font-size: 19px; line-height: 1; margin-left: 3px; font-family: "Noto Sans CJK SC", sans-serif; }
.ime-box { width: 18px; height: 20px; margin-left: 4px; background: #fff; color: #000; font-size: 14px; line-height: 20px; text-align: center; font-family: "Noto Sans CJK SC", sans-serif; }
.clock { width: 74px; font-size: 14.500px; line-height: 22px; text-align: center; color: #fff; white-space: nowrap; font-family: "Open Sans", sans-serif; }
```
